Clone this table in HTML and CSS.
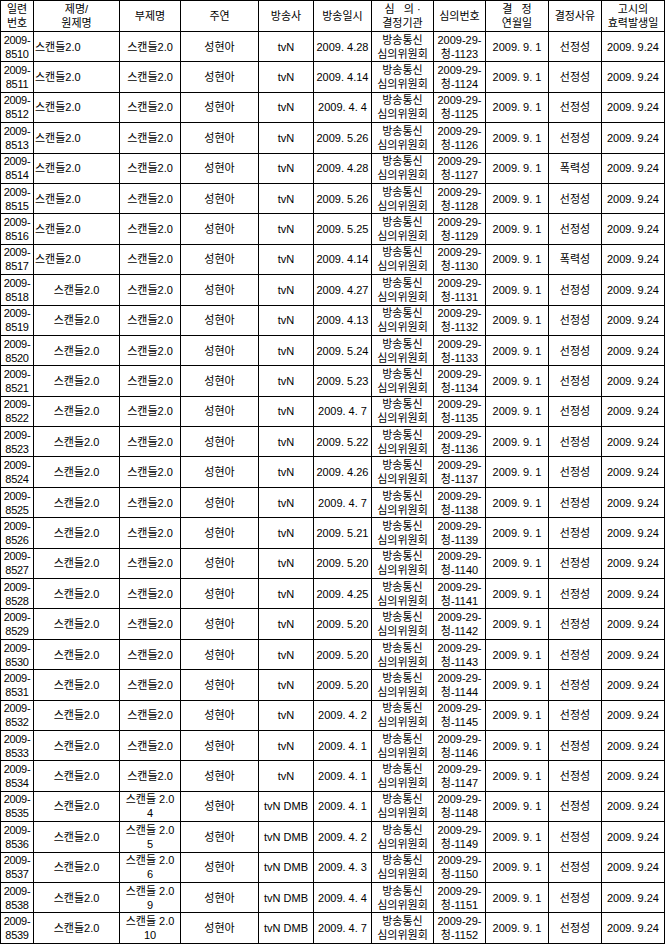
FILE: index.html
```html
<!DOCTYPE html>
<html lang="ko">
<head>
<meta charset="utf-8">
<link rel="stylesheet" href="styles.css">
</head>
<body>
<table class="grid">
<colgroup>
<col class="c1"><col class="c2"><col class="c3"><col class="c4"><col class="c5"><col class="c6"><col class="c7"><col class="c8"><col class="c9"><col class="c10"><col class="c11">
</colgroup>
<thead>
<tr class="head">
<th>일련<br>번호</th><th>제명/<br>원제명</th><th>부제명</th><th>주연</th><th>방송사</th><th>방송일시</th><th>심&nbsp;&nbsp;&nbsp;의&nbsp;·<br>결정기관</th><th>심의번호</th><th>결&nbsp;&nbsp;&nbsp;정<br>연월일</th><th>결정사유</th><th>고시의<br>효력발생일</th>
</tr>
</thead>
<tbody id="rows"></tbody>
</table>
<script src="app.js"></script>
</body>
</html>
```

FILE: styles.css
```css
html, body {
  margin: 0;
  padding: 0;
  background: #ffffff;
}
body {
  font-family: "Liberation Sans", "Noto Sans CJK KR", sans-serif;
  font-size: 11px;
  color: #000000;
}
.grid {
  border-collapse: collapse;
  table-layout: fixed;
  width: 665px;
}
.c1 { width: 33px; }
.c2 { width: 86px; }
.c3 { width: 61px; }
.c4 { width: 78px; }
.c5 { width: 55px; }
.c6 { width: 58px; }
.c7 { width: 62px; }
.c8 { width: 52px; }
.c9 { width: 63px; }
.c10 { width: 53px; }
.c11 { width: 63px; }
.grid th, .grid td {
  border: 1px solid #000000;
  padding: 0 1px;
  text-align: center;
  vertical-align: middle;
  line-height: 14px;
  font-weight: normal;
  white-space: nowrap;
  overflow: hidden;
}
.head { height: 31px; }
.row { height: 30.4px; }
.grid td.left { text-align: left; }
.grid td.num { padding: 0; letter-spacing: -0.3px; }
```

FILE: app.js
```js
var data = [
  ["8510","L","스캔들2.0","tvN","4.28","1123","선정성"],
  ["8511","L","스캔들2.0","tvN","4.14","1124","선정성"],
  ["8512","L","스캔들2.0","tvN","4.\u00a04","1125","선정성"],
  ["8513","L","스캔들2.0","tvN","5.26","1126","선정성"],
  ["8514","L","스캔들2.0","tvN","4.28","1127","폭력성"],
  ["8515","L","스캔들2.0","tvN","5.26","1128","선정성"],
  ["8516","L","스캔들2.0","tvN","5.25","1129","선정성"],
  ["8517","L","스캔들2.0","tvN","4.14","1130","폭력성"],
  ["8518","C","스캔들2.0","tvN","4.27","1131","선정성"],
  ["8519","C","스캔들2.0","tvN","4.13","1132","선정성"],
  ["8520","C","스캔들2.0","tvN","5.24","1133","선정성"],
  ["8521","C","스캔들2.0","tvN","5.23","1134","선정성"],
  ["8522","C","스캔들2.0","tvN","4.\u00a07","1135","선정성"],
  ["8523","C","스캔들2.0","tvN","5.22","1136","선정성"],
  ["8524","C","스캔들2.0","tvN","4.26","1137","선정성"],
  ["8525","C","스캔들2.0","tvN","4.\u00a07","1138","선정성"],
  ["8526","C","스캔들2.0","tvN","5.21","1139","선정성"],
  ["8527","C","스캔들2.0","tvN","5.20","1140","선정성"],
  ["8528","C","스캔들2.0","tvN","4.25","1141","선정성"],
  ["8529","C","스캔들2.0","tvN","5.20","1142","선정성"],
  ["8530","C","스캔들2.0","tvN","5.20","1143","선정성"],
  ["8531","C","스캔들2.0","tvN","5.20","1144","선정성"],
  ["8532","C","스캔들2.0","tvN","4.\u00a02","1145","선정성"],
  ["8533","C","스캔들2.0","tvN","4.\u00a01","1146","선정성"],
  ["8534","C","스캔들2.0","tvN","4.\u00a01","1147","선정성"],
  ["8535","C","스캔들\u00a02.0|4","tvN\u00a0DMB","4.\u00a01","1148","선정성"],
  ["8536","C","스캔들\u00a02.0|5","tvN\u00a0DMB","4.\u00a02","1149","선정성"],
  ["8537","C","스캔들\u00a02.0|6","tvN\u00a0DMB","4.\u00a03","1150","선정성"],
  ["8538","C","스캔들\u00a02.0|9","tvN\u00a0DMB","4.\u00a04","1151","선정성"],
  ["8539","C","스캔들\u00a02.0|10","tvN\u00a0DMB","4.\u00a07","1152","선정성"]
];
var body = document.getElementById("rows");
function cell(tr, lines, cls) {
  var td = document.createElement("td");
  if (cls) td.className = cls;
  lines.forEach(function (t, i) {
    if (i > 0) td.appendChild(document.createElement("br"));
    td.appendChild(document.createTextNode(t));
  });
  tr.appendChild(td);
}
data.forEach(function (d) {
  var tr = document.createElement("tr");
  tr.className = "row";
  cell(tr, ["2009-", d[0]], "num");
  cell(tr, ["스캔들2.0"], d[1] === "L" ? "left" : "");
  cell(tr, d[2].split("|"));
  cell(tr, ["성현아"]);
  cell(tr, [d[3]]);
  cell(tr, ["2009.\u00a0" + d[4]]);
  cell(tr, ["방송통신", "심의위원회"]);
  cell(tr, ["2009-29-", "청-" + d[5]]);
  cell(tr, ["2009.\u00a09.\u00a01"]);
  cell(tr, [d[6]]);
  cell(tr, ["2009.\u00a09.24"]);
  body.appendChild(tr);
});
```
